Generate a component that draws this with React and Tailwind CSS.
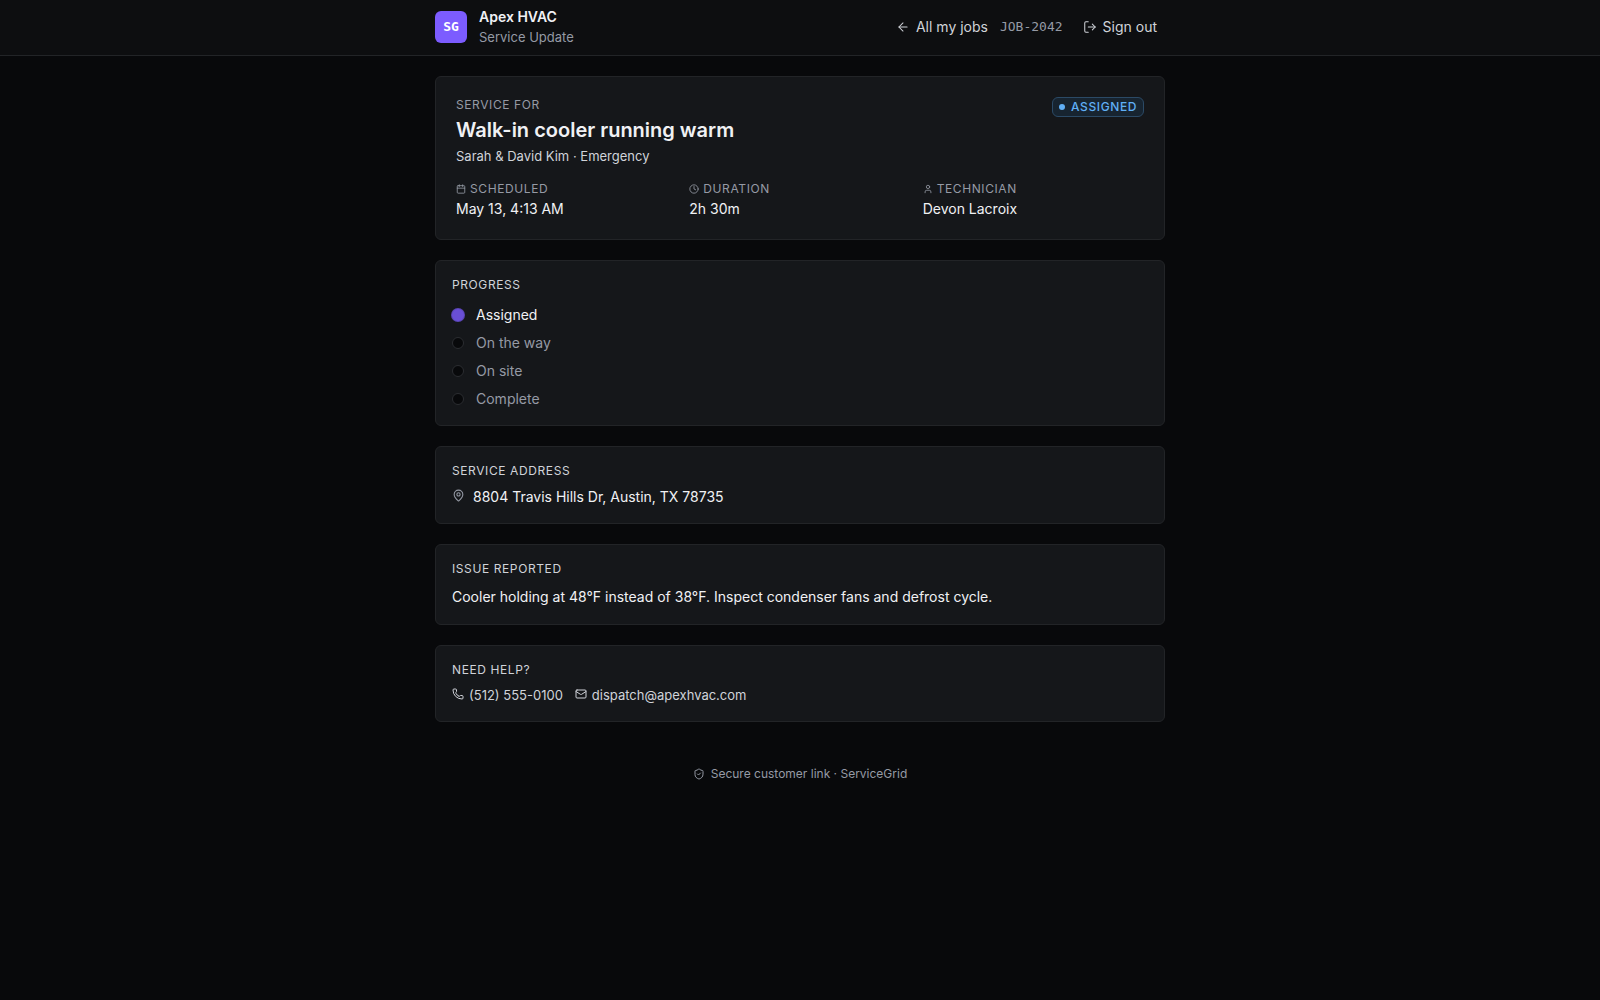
import {
  ArrowLeft,
  Calendar,
  Clock,
  LogOut,
  Mail,
  MapPin,
  Phone,
  ShieldCheck,
  User,
} from 'lucide-react';

const job = {
  id: 'JOB-2042',
  company: 'Apex HVAC',
  title: 'Walk-in cooler running warm',
  customer: 'Sarah & David Kim',
  category: 'Emergency',
  address: '8804 Travis Hills Dr, Austin, TX 78735',
  issue: 'Cooler holding at 48°F instead of 38°F. Inspect condenser fans and defrost cycle.',
  phone: '(512) 555-0100',
  email: 'dispatch@apexhvac.com',
};

const details = [
  { label: 'Scheduled', value: 'May 13, 4:13 AM', icon: Calendar },
  { label: 'Duration', value: '2h 30m', icon: Clock },
  { label: 'Technician', value: 'Devon Lacroix', icon: User },
];

const steps = [
  { label: 'Assigned', current: true },
  { label: 'On the way', current: false },
  { label: 'On site', current: false },
  { label: 'Complete', current: false },
];

function Header() {
  return (
    <header className="border-b border-[#222427] bg-[#0d0e10]">
      <div className="mx-auto flex max-w-[762px] items-center justify-between px-4 pt-[7px] pb-2">
        <div className="flex items-center gap-3">
          <div className="flex h-8 w-8 items-center justify-center rounded-md bg-[#7c5cff] font-['DejaVu_Sans_Mono',monospace] text-[13px] font-bold text-white">
            SG
          </div>
          <div>
            <p className="text-sm leading-5 font-semibold text-[#f0f1f4]">{job.company}</p>
            <p className="text-[13px] leading-5 text-[#959aa5]">Service Update</p>
          </div>
        </div>

        <nav className="flex items-center gap-3 text-sm text-[#d0d3d9]">
          <a href="#jobs" className="flex items-center gap-1.5">
            <ArrowLeft className="h-3.5 w-3.5" strokeWidth={1.75} />
            All my jobs
          </a>
          <span className="font-['DejaVu_Sans_Mono',monospace] text-[13px] text-[#959aa5]">{job.id}</span>
          <button type="button" className="flex items-center gap-1.5 px-2">
            <LogOut className="h-3.5 w-3.5" strokeWidth={1.75} />
            Sign out
          </button>
        </nav>
      </div>
    </header>
  );
}

function Section({ title, children }) {
  return (
    <section className="rounded-md border border-[#222427] bg-[#15171a] p-4">
      <h2 className="text-xs leading-4 tracking-wider text-[#d0d3d9] uppercase">{title}</h2>
      {children}
    </section>
  );
}

export default function App() {
  return (
    <div className="min-h-screen bg-[#08090b] font-['Inter',sans-serif] text-[#f0f1f4]">
      <Header />

      <main className="mx-auto flex max-w-[762px] flex-col gap-5 px-4 py-5">
        {/* Summary */}
        <section className="rounded-md border border-[#222427] bg-[#15171a] p-5">
          <div className="flex items-start justify-between">
            <div>
              <p className="text-xs leading-4 tracking-wider text-[#959aa5] uppercase">Service for</p>
              <h1 className="mt-1 text-xl leading-[26px] font-semibold">{job.title}</h1>
              <p className="mt-1 text-[13px] leading-[18px] text-[#d0d3d9]">
                {job.customer} · {job.category}
              </p>
            </div>
            <span className="flex h-5 items-center gap-1.5 rounded-md border border-[#2b4a66] bg-[#172430] px-1.5 text-xs font-medium tracking-wider text-[#60aff5] uppercase">
              <span className="h-1.5 w-1.5 rounded-full bg-[#60aff5]"></span>
              Assigned
            </span>
          </div>

          <dl className="mt-3.5 grid grid-cols-3 gap-3">
            {details.map((detail) => {
              const Icon = detail.icon;
              return (
                <div key={detail.label}>
                  <dt className="flex items-center gap-1 text-xs leading-5 tracking-wider text-[#959aa5] uppercase">
                    <Icon className="h-2.5 w-2.5" />
                    {detail.label}
                  </dt>
                  <dd className="text-sm leading-5">{detail.value}</dd>
                </div>
              );
            })}
          </dl>
        </section>

        <Section title="Progress">
          <ol className="mt-3 flex flex-col gap-2">
            {steps.map((step) => (
              <li key={step.label} className="flex items-center gap-3 text-sm leading-5">
                <span
                  className={`h-3 w-3 rounded-full ${
                    step.current ? 'bg-[#694fd6] ring-1 ring-[#5a45b5]' : 'border border-[#2b2d31] bg-[#08090b]'
                  }`}
                ></span>
                <span className={step.current ? 'text-[#f0f1f4]' : 'text-[#959aa5]'}>{step.label}</span>
              </li>
            ))}
          </ol>
        </Section>

        <Section title="Service address">
          <p className="mt-2 flex items-start gap-2 text-sm leading-5">
            <MapPin className="mt-0.5 h-[13px] w-[13px] text-[#959aa5]" />
            {job.address}
          </p>
        </Section>

        <Section title="Issue reported">
          <p className="mt-2 text-sm leading-[23px]">{job.issue}</p>
        </Section>

        <Section title="Need help?">
          <div className="mt-2 flex gap-3 text-[13px] leading-[19px] text-[#d0d3d9]">
            <a href="tel:+15125550100" className="flex items-start gap-[5px]">
              <Phone className="mt-0.5 h-3 w-3" />
              {job.phone}
            </a>
            <a href="mailto:dispatch@apexhvac.com" className="flex items-start gap-[5px]">
              <Mail className="mt-0.5 h-3 w-3" />
              {job.email}
            </a>
          </div>
        </Section>

        <footer className="mt-[22px] flex items-center justify-center gap-1.5 text-xs leading-5 text-[#959aa5]">
          <ShieldCheck className="h-3 w-3" />
          Secure customer link · ServiceGrid
        </footer>
      </main>
    </div>
  );
}
